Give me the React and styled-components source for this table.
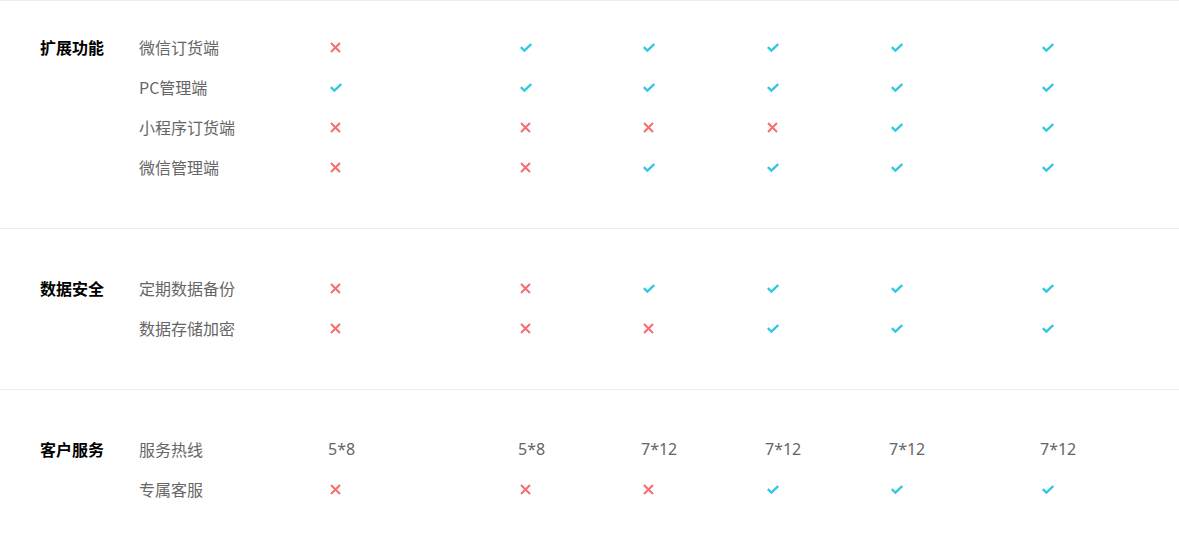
import React from 'react';
import styled, { createGlobalStyle } from 'styled-components';

const GlobalStyle = createGlobalStyle`
  body {
    margin: 0;
    background: #fff;
    font-family: "Microsoft YaHei", "Noto Sans CJK SC", "Liberation Sans", sans-serif;
  }
`;

const sections = [
  {
    title: '扩展功能',
    top: 27,
    rows: [
      ['微信订货端', [0, 1, 1, 1, 1, 1]],
      ['PC管理端', [1, 1, 1, 1, 1, 1]],
      ['小程序订货端', [0, 0, 0, 0, 1, 1]],
      ['微信管理端', [0, 0, 1, 1, 1, 1]],
    ],
  },
  {
    title: '数据安全',
    top: 40,
    rows: [
      ['定期数据备份', [0, 0, 1, 1, 1, 1]],
      ['数据存储加密', [0, 0, 0, 1, 1, 1]],
    ],
  },
  {
    title: '客户服务',
    top: 40,
    rows: [
      ['服务热线', ['5*8', '5*8', '7*12', '7*12', '7*12', '7*12']],
      ['专属客服', [0, 0, 0, 1, 1, 1]],
    ],
  },
];

const Cross = () => (
  <svg width="11" height="11" viewBox="0 0 11 11">
    <path d="M1 1 L10 10 M10 1 L1 10" stroke="#f86b6e" strokeWidth="2" fill="none" />
  </svg>
);

const Check = () => (
  <svg width="12" height="10" viewBox="0 0 12 10">
    <path d="M0.8 4.2 L4.4 7.6 L11.2 1" stroke="#34c8e0" strokeWidth="2.4" fill="none" />
  </svg>
);

const Cell = ({ value }) => {
  if (typeof value === 'string') return <ValueText>{value}</ValueText>;
  return <IconBox up={value ? 0 : 2}>{value ? <Check /> : <Cross />}</IconBox>;
};

const App = () => {
  return (
    <Page>
      <GlobalStyle />
      {sections.map(({ title, top, rows }) => (
        <Section key={title} top={top}>
          <Category>{title}</Category>
          <RowList>
            {rows.map(([name, values]) => (
              <Row key={name}>
                <FeatureName>{name}</FeatureName>
                {values.map((v, i) => (
                  <Cell key={i} value={v} />
                ))}
              </Row>
            ))}
          </RowList>
        </Section>
      ))}
    </Page>
  );
};

const Page = styled.div`
  width: 1179px;
  background: #fff;
`;

const Section = styled.section`
  display: flex;
  padding: ${(props) => props.top}px 0 40px 40px;
  border-top: 1px solid #ececec;
`;

const Category = styled.div`
  width: 99px;
  flex: 0 0 99px;
  line-height: 38px;
  height: 40px;
  font-size: 16px;
  font-weight: 700;
  color: #000;
`;

const RowList = styled.div`
  display: flex;
  flex-direction: column;
  flex: 1;
`;

const Row = styled.div`
  display: grid;
  grid-template-columns: 189px 190px 123px 124px 124px 151px 1fr;
  align-items: center;
  height: 40px;
`;

const FeatureName = styled.div`
  font-size: 16px;
  color: #666;
  padding-bottom: 2px;
`;

const ValueText = styled.div`
  font-size: 16px;
  color: #666;
  padding-bottom: 2px;
  font-family: "Microsoft YaHei", "Noto Sans", "Liberation Sans", sans-serif;
`;

const IconBox = styled.div`
  display: flex;
  align-items: center;
  padding-left: 2px;
  height: 40px;
  margin-top: -${(props) => props.up}px;
`;

export default App;
